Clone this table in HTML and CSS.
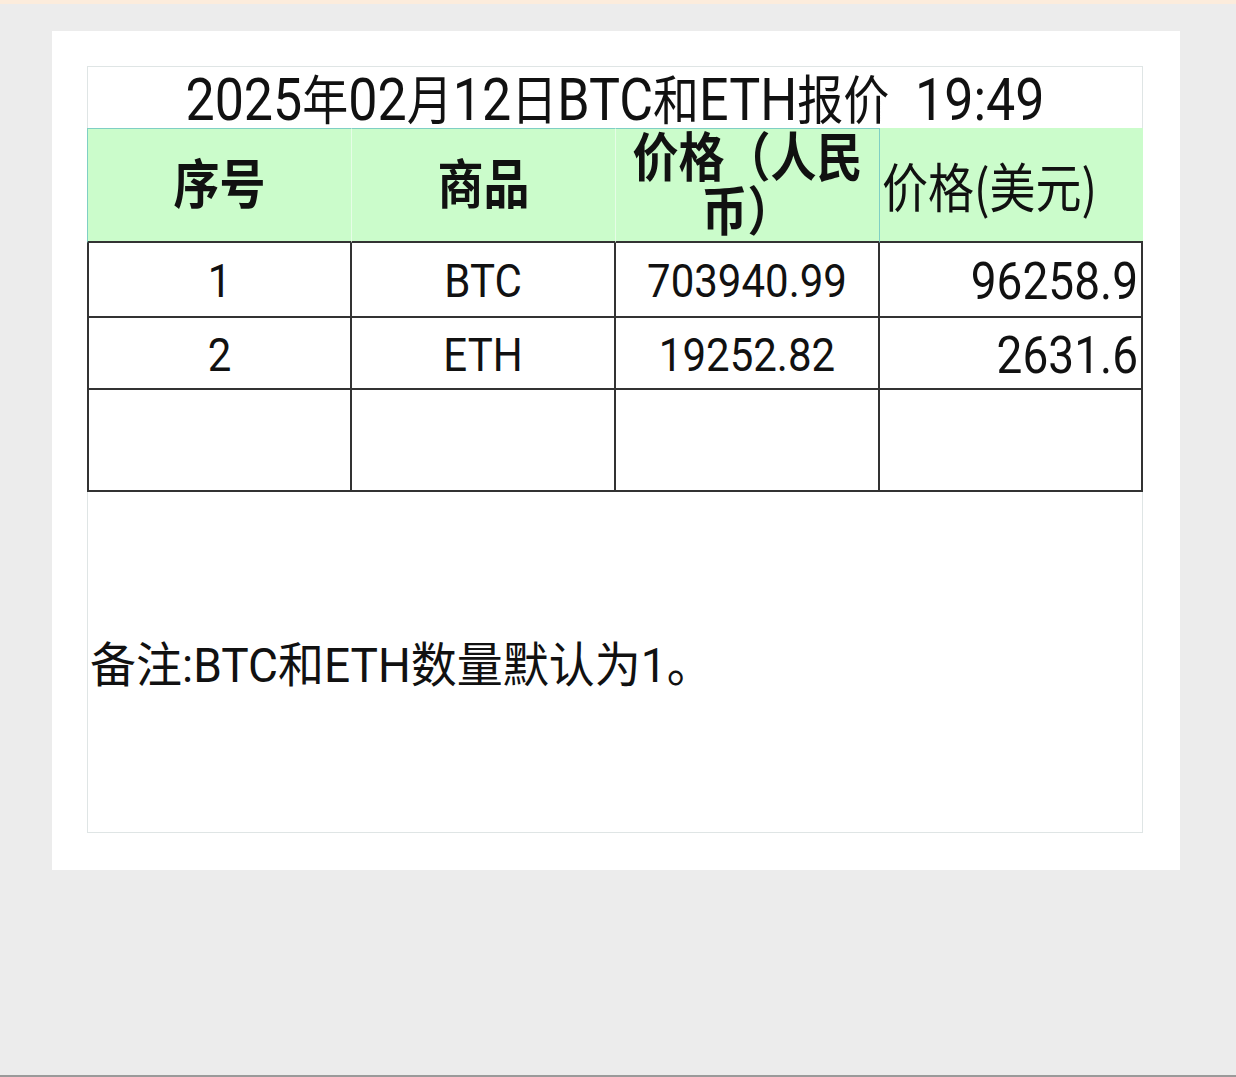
FILE: index.html
```html
<!DOCTYPE html>
<html lang="zh-CN">
<head>
<meta charset="utf-8">
<title>BTC和ETH报价</title>
<link rel="stylesheet" href="styles.css">
</head>
<body>
<div class="strip"></div>
<main class="stage">
  <section class="card">
    <div class="sheet">
      <div class="title"><span class="tx"><span class="lat">2025</span>年<span class="lat">02</span>月<span class="lat">12</span>日<span class="lat">BTC</span>和<span class="lat">ETH</span>报价<span class="lat">  19:49</span></span></div>
      <div class="grid">
        <div class="cell head h1"><span class="tx">序号</span></div>
        <div class="cell head h2"><span class="tx">商品</span></div>
        <div class="cell head h3"><span class="tx">价格（人民币）</span></div>
        <div class="cell head h4"><span class="tx">价格(美元)</span></div>

        <div class="cell d first"><span class="tx">1</span></div>
        <div class="cell d"><span class="tx">BTC</span></div>
        <div class="cell d rmb"><span class="tx">703940.99</span></div>
        <div class="cell d usd"><span class="tx">96258.9</span></div>

        <div class="cell d first"><span class="tx">2</span></div>
        <div class="cell d"><span class="tx">ETH</span></div>
        <div class="cell d rmb"><span class="tx">19252.82</span></div>
        <div class="cell d usd"><span class="tx">2631.6</span></div>

        <div class="cell d first"></div>
        <div class="cell d"></div>
        <div class="cell d"></div>
        <div class="cell d"></div>
      </div>
      <p class="note"><span class="tx">备注<span class="lat">:BTC</span>和<span class="lat">ETH</span>数量默认为<span class="lat">1</span>。</span></p>
    </div>
  </section>
</main>
<div class="baseline"></div>
</body>
</html>
```

FILE: styles.css
```css
* { box-sizing: border-box; }

html, body {
  margin: 0;
  padding: 0;
}

body {
  width: 1236px;
  height: 1077px;
  background: #ececec;
  display: flex;
  flex-direction: column;
  font-family: "Noto Sans CJK SC", sans-serif;
  color: #111111;
  overflow: hidden;
}

.lat {
  font-family: Roboto, "Noto Sans CJK SC", sans-serif;
}

.tx {
  display: inline-block;
}

.strip {
  height: 4px;
  background: #fcecdc;
  flex: none;
}

.stage {
  flex: 1;
  padding: 27px 0 0 52px;
}

.card {
  width: 1128px;
  height: 839px;
  background: #ffffff;
  padding: 35px 0 0 35px;
}

.sheet {
  width: 1056px;
  height: 767px;
  box-shadow: inset 0 0 0 1px #dfe5e5;
}

/* title */
.title {
  height: 62px;
  display: flex;
  align-items: center;
  justify-content: center;
  padding-top: 3px;
  font-size: 46px;
  line-height: 48px;
  white-space: pre;
}

.title .tx {
  transform: scaleY(1.15);
}

.title .lat {
  font-size: 52px;
}

/* table */
.grid {
  display: grid;
  grid-template-columns: 265px 264px 264px 263px;
  grid-template-rows: 115px 75px 72px 102px;
}

.cell {
  display: flex;
  align-items: center;
  justify-content: center;
  white-space: nowrap;
}

.head {
  background: #cbfccb;
  border-bottom: 2px solid #333;
  font-size: 46px;
  font-weight: bold;
  line-height: 47px;
  text-align: center;
  padding-bottom: 8px;
}

.head .tx {
  transform: scaleY(1.15);
}

.h1, .h2, .h3 {
  border-top: 1px solid #7fcfc4;
}

.h1 {
  border-left: 1px solid #7fcfc4;
  border-right: 1px solid #e6fde6;
}

.h2 {
  border-right: 1px solid #e6fde6;
}

.h3 {
  border-right: 1px solid #7fcfc4;
  white-space: normal;
  padding-left: 6px;
  padding-right: 6px;
  padding-bottom: 6px;
}

.h4 {
  font-weight: normal;
  justify-content: flex-start;
  padding: 2px 0 0 2px;
}

.d {
  border-right: 2px solid #333;
  border-bottom: 2px solid #333;
  font-family: Roboto, "Noto Sans CJK SC", sans-serif;
  font-size: 42px;
  line-height: 48px;
  padding-top: 3px;
  overflow: hidden;
}

.d .tx {
  transform: scaleY(1.12);
}

.first {
  border-left: 2px solid #333;
}

.usd {
  font-size: 46px;
  justify-content: flex-end;
  padding-right: 3px;
}

/* note */
.note {
  margin: 141px 0 0 0;
  padding-left: 3px;
  font-size: 46px;
  line-height: 56px;
}

.note .tx {
  transform: scaleY(1.05);
}

.baseline {
  height: 2px;
  background: #9a9a9a;
  flex: none;
}
```
